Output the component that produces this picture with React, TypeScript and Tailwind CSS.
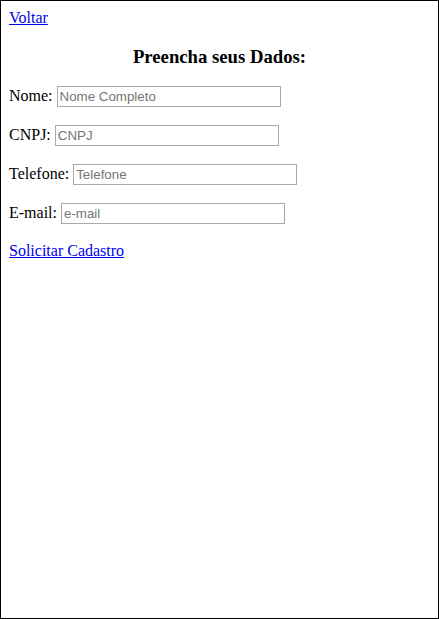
import React from "react";

function Field({ label, placeholder }: { label: string; placeholder: string }) {
  return (
    <p className="mb-[18px] leading-[normal]">
      {label}{" "}
      <input
        type="text"
        placeholder={placeholder}
        className="w-[224px] h-[21px] px-[2px] py-[1px] border border-[#a9a9a9] font-['Liberation_Sans',Arial,sans-serif] text-[13.333px] text-black placeholder:text-[#757575] align-baseline outline-none"
      />
    </p>
  );
}

export default function App() {
  return (
    <div className="w-[439px] h-[619px] border border-black bg-white p-2 font-['Liberation_Serif','Times_New_Roman',serif] text-[16px] text-black leading-[normal]">
      <div>
        <a href="#" className="text-[#0000ee] underline">
          Voltar
        </a>
      </div>
      <h3 className="text-center font-bold text-[18.72px] leading-[normal] my-[18.72px]">
        Preencha seus Dados:
      </h3>
      <Field label="Nome:" placeholder="Nome Completo" />
      <Field label="CNPJ:" placeholder="CNPJ" />
      <Field label="Telefone:" placeholder="Telefone" />
      <Field label="E-mail:" placeholder="e-mail" />
      <p className="leading-[normal]">
        <a href="#" className="text-[#0000ee] underline">
          Solicitar Cadastro
        </a>
      </p>
    </div>
  );
}
